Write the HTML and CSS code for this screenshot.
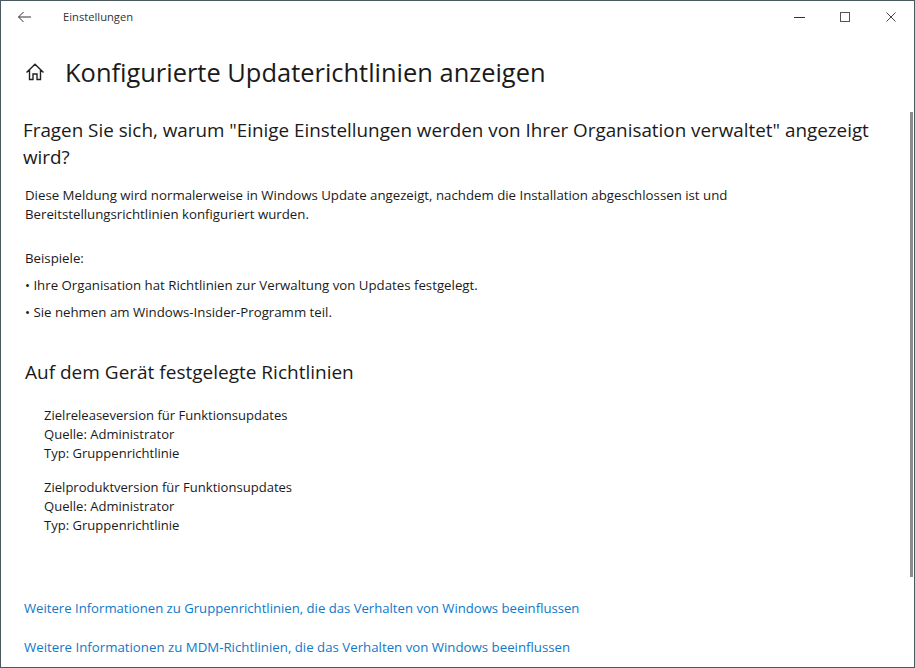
FILE: index.html
```html
<!DOCTYPE html>
<html lang="de">
<head>
<meta charset="utf-8">
<title>Einstellungen</title>
<link rel="stylesheet" href="styles.css">
</head>
<body>
<div class="window">
  <header class="titlebar">
    <svg class="back" width="16" height="14" viewBox="0 0 16 14"><path d="M14 7H1.5M6.5 2L1.5 7L6.5 12" fill="none" stroke="#333" stroke-width="1"/></svg>
    <span class="apptitle">Einstellungen</span>
    <div class="controls">
      <svg width="12" height="12" viewBox="0 0 12 12"><path d="M1 6.5H12" stroke="#333" fill="none"/></svg>
      <svg width="12" height="12" viewBox="0 0 12 12"><rect x="1.5" y="1.5" width="9" height="9" stroke="#555" fill="none"/></svg>
      <svg width="12" height="12" viewBox="0 0 12 12"><path d="M1.5 1.5L10.5 10.5M10.5 1.5L1.5 10.5" stroke="#444" fill="none"/></svg>
    </div>
  </header>
  <div class="pagehead">
    <svg class="home" width="20" height="20" viewBox="0 0 20 20"><path d="M1.5 10.5L10 2.3L18.5 10.5M4.5 8V17.5H8V12H12V17.5H15.5V8" fill="none" stroke="#222" stroke-width="1.4"/></svg>
    <h1>Konfigurierte Updaterichtlinien anzeigen</h1>
  </div>
  <main class="content">
    <h2>Fragen Sie sich, warum "Einige Einstellungen werden von Ihrer Organisation verwaltet" angezeigt wird?</h2>
    <p class="intro">Diese Meldung wird normalerweise in Windows Update angezeigt, nachdem die Installation abgeschlossen ist und Bereitstellungsrichtlinien konfiguriert wurden.</p>
    <p class="ex-label">Beispiele:</p>
    <p class="ex">• Ihre Organisation hat Richtlinien zur Verwaltung von Updates festgelegt.</p>
    <p class="ex">• Sie nehmen am Windows-Insider-Programm teil.</p>
    <h3>Auf dem Gerät festgelegte Richtlinien</h3>
    <div class="policy">Zielreleaseversion für Funktionsupdates<br>Quelle: Administrator<br>Typ: Gruppenrichtlinie</div>
    <div class="policy">Zielproduktversion für Funktionsupdates<br>Quelle: Administrator<br>Typ: Gruppenrichtlinie</div>
    <a class="link first" href="#">Weitere Informationen zu Gruppenrichtlinien, die das Verhalten von Windows beeinflussen</a>
    <a class="link mdm" href="#">Weitere Informationen zu MDM-Richtlinien, die das Verhalten von Windows beeinflussen</a>
  </main>
  <div class="scrollthumb"></div>
</div>
</body>
</html>
```
FILE: styles.css
```css
* { box-sizing: border-box; }
html, body { margin: 0; height: 100%; overflow: hidden; }
body { background: #fff; color: #1a1a1a; font-family: "Open Sans", "Noto Sans", sans-serif; }
.window {
  position: relative;
  width: 915px;
  height: 668px;
  border: 1px solid #4a5a5e;
  overflow: hidden;
}
.titlebar { display: flex; align-items: center; height: 31px; padding-left: 16px; }
.back { flex: none; }
.apptitle { margin-left: 30px; font-size: 11.2px; color: #333; }
.controls { margin-left: auto; display: flex; gap: 34px; padding-right: 17px; }
.pagehead { display: flex; align-items: center; height: 58px; padding-left: 24px; margin-top: 11px; }
.home { flex: none; }
h1 { margin: 0 0 0 20px; font-size: 25.45px; font-weight: 400; color: #1a1a1a; white-space: nowrap; }
.content { padding: 16px 30px 0 23px; }
h2 { margin: 0 0 0 -1px; font-size: 18.83px; line-height: 27px; font-weight: 400; }
.intro { max-width: 720px; margin: 15px 0 0 1px; font-size: 13.25px; line-height: 19px; }
.ex-label { margin: 25px 0 0 1px; font-size: 13.25px; line-height: 19px; }
.ex { margin: 8px 0 0 1px; font-size: 13.25px; line-height: 19px; }
h3 { margin: 37px 0 0 1px; font-size: 19px; line-height: 26px; font-weight: 400; }
.policy { margin: 21px 0 0 20px; font-size: 13.06px; line-height: 19px; }
.policy + .policy { margin-top: 15px; }
.link { display: block; font-size: 13.14px; line-height: 19px; color: #0f78c8; text-decoration: none; white-space: nowrap; }
.link.first { margin-top: 64px; }
.link.mdm { margin-top: 20px; font-size: 13.25px; }
.scrollthumb { position: absolute; right: 1px; top: 111px; width: 3px; height: 465px; background: #8c8c8c; }
```
